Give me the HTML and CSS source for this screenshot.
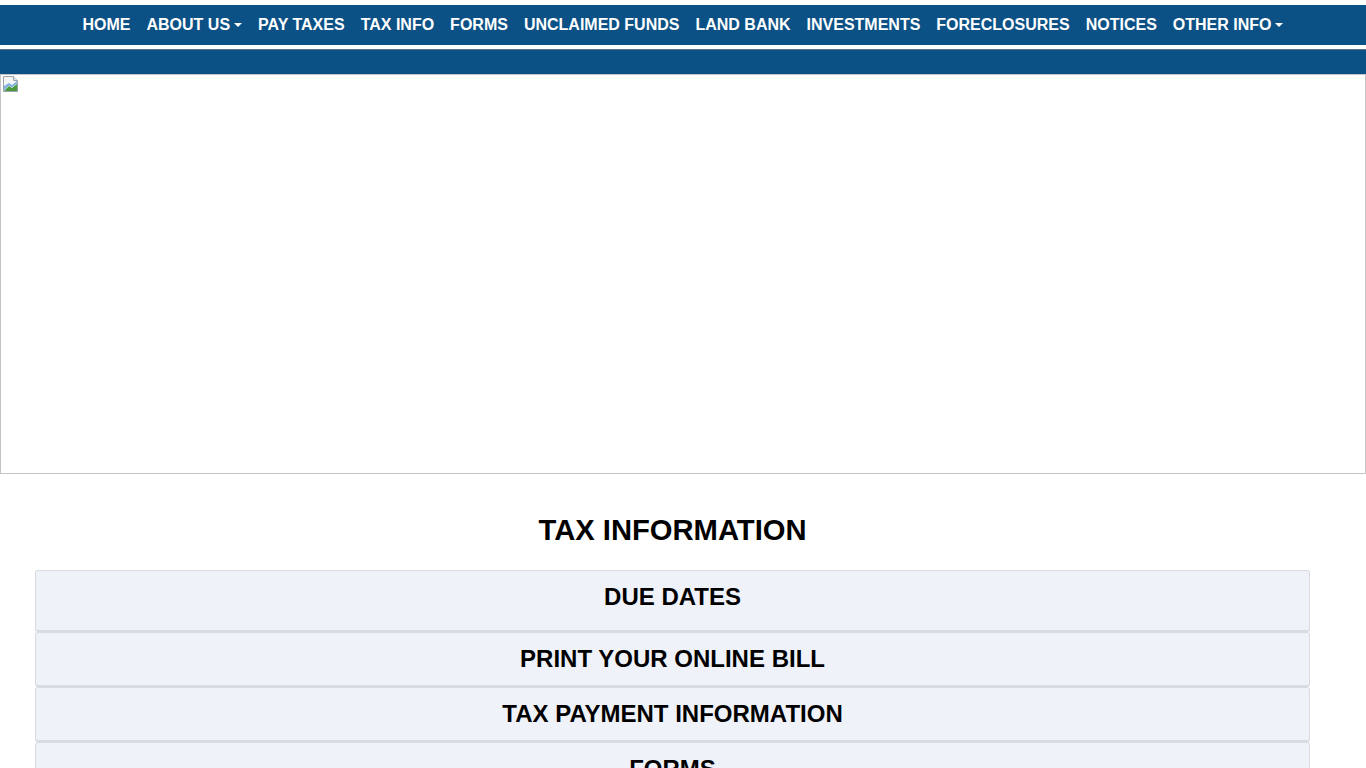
FILE: index.html
```html
<!DOCTYPE html>
<html lang="en">
<head>
    <meta charset="UTF-8">
    <meta name="viewport" content="width=device-width, initial-scale=1.0">
    <title>Tax Information</title>
    <link rel="stylesheet" href="styles.css">
</head>
<body>
    <nav class="main-nav">
        <a href="#" class="nav-link">HOME</a>
        <a href="#" class="nav-link dropdown-toggle">ABOUT US</a>
        <a href="#" class="nav-link">PAY TAXES</a>
        <a href="#" class="nav-link">TAX INFO</a>
        <a href="#" class="nav-link">FORMS</a>
        <a href="#" class="nav-link">UNCLAIMED FUNDS</a>
        <a href="#" class="nav-link">LAND BANK</a>
        <a href="#" class="nav-link">INVESTMENTS</a>
        <a href="#" class="nav-link">FORECLOSURES</a>
        <a href="#" class="nav-link">NOTICES</a>
        <a href="#" class="nav-link dropdown-toggle">OTHER INFO</a>
    </nav>

    <div class="sub-band"></div>

    <div class="banner">
        <!-- broken image placeholder -->
        <svg class="broken-img" width="18" height="18" viewBox="0 0 18 18">
            <path d="M1.5 1.5h10l4 4v11h-14z" fill="#f4f6f8" stroke="#9aa3ab"/>
            <path d="M11.5 1.5v4h4" fill="#e2e6ea" stroke="#9aa3ab"/>
            <path d="M2 16l5-5 3 2 5-4v7z" fill="#4a9a3c"/>
            <path d="M2 11l5-3 3 2 5-4v2.5l-5 4-3-2-5 5z" fill="#7fb3dd"/>
        </svg>
    </div>

    <main class="content">
        <h2 class="page-title">TAX INFORMATION</h2>

        <div class="card-list">
            <div class="info-card first">DUE DATES</div>
            <div class="info-card">PRINT YOUR ONLINE BILL</div>
            <div class="info-card">TAX PAYMENT INFORMATION</div>
            <div class="info-card">FORMS</div>
        </div>
    </main>
</body>
</html>
```

FILE: styles.css
```css
/* General styles */
body {
    margin: 0;
    padding-top: 5px;
    font-family: "Liberation Sans", Arial, sans-serif;
    background-color: #fff;
    color: #000;
}

.main-nav {
    display: flex;
    justify-content: center;
    align-items: center;
    height: 40px;
    background-color: #0c5185;
}

.nav-link {
    padding: 0 8px;
    color: #fff;
    font-size: 16px;
    font-weight: bold;
    text-decoration: none;
    white-space: nowrap;
}

.dropdown-toggle::after {
    content: "";
    display: inline-block;
    margin-left: 4px;
    vertical-align: 3px;
    border-top: 4px solid #fff;
    border-left: 4px solid transparent;
    border-right: 4px solid transparent;
}

.sub-band {
    height: 24px;
    margin-top: 4px;
    border-top: 1px solid #5d7288;
    background-color: #0c5185;
}

.banner {
    height: 398px;
    border: 1px solid #c4c4c4;
}

.broken-img {
    display: block;
    margin: 0 0 0 1px;
}

.content {
    padding: 0 56px 0 35px;
}

.page-title {
    margin: 40px 0 23px;
    text-align: center;
    font-size: 29.2px;
    font-weight: bold;
}

.info-card {
    padding: 12px 0;
    text-align: center;
    font-size: 24px;
    font-weight: bold;
    line-height: 28px;
    background-color: #eff2f8;
    border: 1px solid #d8dce2;
    border-bottom-width: 2px;
    border-radius: 3px;
}

.info-card.first {
    padding-bottom: 19px;
}
```
